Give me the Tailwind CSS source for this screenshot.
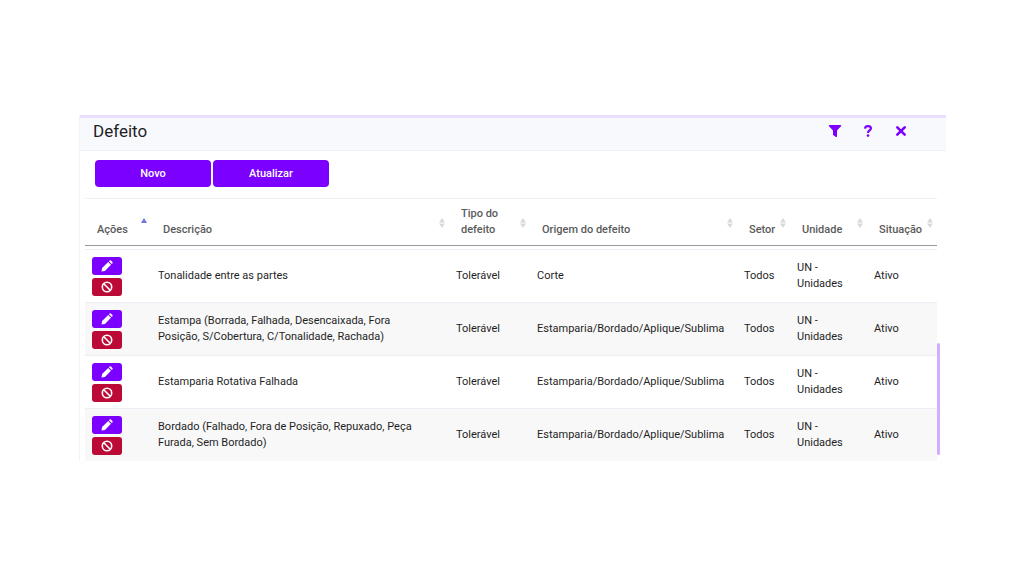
<!DOCTYPE html>
<html lang="pt-BR">
  <head>
    <meta charset="UTF-8" />
    <meta name="viewport" content="width=device-width, initial-scale=1.0" />
    <title>Defeito</title>
    <script src="https://cdn.jsdelivr.net/npm/@tailwindcss/browser@4"></script>
  </head>
  <body class="bg-white font-['Roboto',sans-serif] text-[11px] leading-4 text-[#1f1f1f]">
    <!-- Ícones -->
    <svg class="hidden">
      <symbol id="pencil" viewBox="0 0 12 12">
        <path d="M.5 11.500l.6-3.400L7.200 2l2.800 2.800-6.100 6.100z" />
        <path d="M7.900 1.300l.7-.7a1 1 0 0 1 1.300 0l1.500 1.500a1 1 0 0 1 0 1.300l-.7.7z" />
      </symbol>
      <symbol id="ban" viewBox="0 0 12 12">
        <circle cx="6" cy="6" r="4.700" fill="none" stroke="currentColor" stroke-width="1.600" />
        <path d="M2.800 2.800l6.400 6.400" stroke="currentColor" stroke-width="1.600" />
      </symbol>
      <symbol id="sort" viewBox="0 0 6 10">
        <path d="M3 0l3 4.500H0zM3 10L0 5.500h6z" />
      </symbol>
    </svg>

    <main class="mt-[115px] mr-[78px] ml-[79px] border-l border-[#f3f3f9]">
      <header class="flex items-start justify-between border-t-3 border-b border-t-[#ebdffd] border-b-[#eff0f5] bg-[#f8f9fd] pr-[38px] pb-1.5 pl-[13px]">
        <h1 class="text-[17px] leading-[26px]">Defeito</h1>
        <div class="flex h-[26px] items-center gap-[19px] text-[#7b00ff]">
          <button type="button" aria-label="Filtrar" class="flex size-3.5 items-center justify-center">
            <svg class="size-3.5" viewBox="0 0 14 14" fill="currentColor"><path d="M1.500 1h11c.7 0 1 .8.500 1.300L9 6.500V12.500c0 .5-.6.800-1 .5L5.400 11.200A.8.8 0 0 1 5 10.500v-4L1 2.300C.5 1.800.8 1 1.500 1z" /></svg>
          </button>
          <button type="button" aria-label="Ajuda" class="flex size-3.5 items-center justify-center">
            <svg class="size-3.5" viewBox="0 0 14 14" fill="none" stroke="currentColor" stroke-width="2.200"><path d="M4 4.600C4.200 3 5.300 2.200 7 2.200c1.800 0 2.900.9 2.900 2.300C9.900 6.500 7 6.500 7 8.900" /><circle cx="7" cy="11.600" r="1.300" fill="currentColor" stroke="none" /></svg>
          </button>
          <button type="button" aria-label="Fechar" class="flex size-3.5 items-center justify-center">
            <svg class="size-3.5" viewBox="0 0 14 14" fill="none" stroke="currentColor" stroke-width="2.600" stroke-linecap="round"><path d="M3.300 3.300l7.400 7.400M10.700 3.300l-7.400 7.400" /></svg>
          </button>
        </div>
      </header>

      <div class="flex gap-0.5 pt-[9px] pb-[11px] pl-[15px] font-medium text-white">
        <button type="button" class="h-[27px] w-29 rounded bg-[#7b00ff]">Novo</button>
        <button type="button" class="h-[27px] w-29 rounded bg-[#7b00ff]">Atualizar</button>
      </div>

      <div class="flex items-end pr-1.5 pl-[5px]">
        <table class="w-full table-fixed border-separate border-spacing-0 border-t border-[#eff0f5] text-left">
          <colgroup>
            <col class="w-[66px]" />
            <col />
            <col class="w-[81px]" />
            <col class="w-[207px]" />
            <col class="w-[53px]" />
            <col class="w-[77px]" />
            <col class="w-[70px]" />
          </colgroup>
          <thead class="align-bottom text-[#5b5b5b]">
            <tr class="*:relative *:h-[47px] *:border-b *:border-[#999] *:pb-[7px] *:pl-3 *:font-medium">
              <th scope="col">Ações<svg class="absolute top-[19px] right-1 h-[10px] w-1.5" viewBox="0 0 6 10" fill="#6f78e0"><path d="M3 0l3 5H0z" /></svg></th>
              <th scope="col">Descrição<svg class="absolute top-[19px] right-1 h-[10px] w-1.5 fill-[#d9d9d9]"><use href="#sort" /></svg></th>
              <th scope="col">Tipo do<br />defeito<svg class="absolute top-[19px] right-1 h-[10px] w-1.5 fill-[#d9d9d9]"><use href="#sort" /></svg></th>
              <th scope="col">Origem do defeito<svg class="absolute top-[19px] right-1 h-[10px] w-1.5 fill-[#d9d9d9]"><use href="#sort" /></svg></th>
              <th scope="col">Setor<svg class="absolute top-[19px] right-1 h-[10px] w-1.5 fill-[#d9d9d9]"><use href="#sort" /></svg></th>
              <th scope="col">Unidade<svg class="absolute top-[19px] right-1 h-[10px] w-1.5 fill-[#d9d9d9]"><use href="#sort" /></svg></th>
              <th scope="col">Situação<svg class="absolute top-[19px] right-1 h-[10px] w-1.5 fill-[#d9d9d9]"><use href="#sort" /></svg></th>
            </tr>
            <tr aria-hidden="true"><td colspan="7" class="h-[3px]"></td></tr>
          </thead>
          <tbody class="*:*:h-[53px] *:*:border-t *:*:border-[#eeeef6] *:*:pl-[7px] *:even:bg-[#f8f8f8]">
            <tr>
              <td>
                <div class="flex w-[30px] flex-col gap-[3px] text-white">
                  <button type="button" aria-label="Editar" class="flex h-[18px] items-center justify-center rounded-[3px] bg-[#7b00ff]"><svg class="size-3 fill-current"><use href="#pencil" /></svg></button>
                  <button type="button" aria-label="Inativar" class="flex h-[18px] items-center justify-center rounded-[3px] bg-[#bb0a35]"><svg class="size-3"><use href="#ban" /></svg></button>
                </div>
              </td>
              <td>Tonalidade entre as partes</td>
              <td>Tolerável</td>
              <td>Corte</td>
              <td>Todos</td>
              <td>UN -<br />Unidades</td>
              <td>Ativo</td>
            </tr>
            <tr>
              <td>
                <div class="flex w-[30px] flex-col gap-[3px] text-white">
                  <button type="button" aria-label="Editar" class="flex h-[18px] items-center justify-center rounded-[3px] bg-[#7b00ff]"><svg class="size-3 fill-current"><use href="#pencil" /></svg></button>
                  <button type="button" aria-label="Inativar" class="flex h-[18px] items-center justify-center rounded-[3px] bg-[#bb0a35]"><svg class="size-3"><use href="#ban" /></svg></button>
                </div>
              </td>
              <td>Estampa (Borrada, Falhada, Desencaixada, Fora<br />Posição, S/Cobertura, C/Tonalidade, Rachada)</td>
              <td>Tolerável</td>
              <td>Estamparia/Bordado/Aplique/Sublima</td>
              <td>Todos</td>
              <td>UN -<br />Unidades</td>
              <td>Ativo</td>
            </tr>
            <tr>
              <td>
                <div class="flex w-[30px] flex-col gap-[3px] text-white">
                  <button type="button" aria-label="Editar" class="flex h-[18px] items-center justify-center rounded-[3px] bg-[#7b00ff]"><svg class="size-3 fill-current"><use href="#pencil" /></svg></button>
                  <button type="button" aria-label="Inativar" class="flex h-[18px] items-center justify-center rounded-[3px] bg-[#bb0a35]"><svg class="size-3"><use href="#ban" /></svg></button>
                </div>
              </td>
              <td>Estamparia Rotativa Falhada</td>
              <td>Tolerável</td>
              <td>Estamparia/Bordado/Aplique/Sublima</td>
              <td>Todos</td>
              <td>UN -<br />Unidades</td>
              <td>Ativo</td>
            </tr>
            <tr>
              <td>
                <div class="flex w-[30px] flex-col gap-[3px] text-white">
                  <button type="button" aria-label="Editar" class="flex h-[18px] items-center justify-center rounded-[3px] bg-[#7b00ff]"><svg class="size-3 fill-current"><use href="#pencil" /></svg></button>
                  <button type="button" aria-label="Inativar" class="flex h-[18px] items-center justify-center rounded-[3px] bg-[#bb0a35]"><svg class="size-3"><use href="#ban" /></svg></button>
                </div>
              </td>
              <td>Bordado (Falhado, Fora de Posição, Repuxado, Peça<br />Furada, Sem Bordado)</td>
              <td>Tolerável</td>
              <td>Estamparia/Bordado/Aplique/Sublima</td>
              <td>Todos</td>
              <td>UN -<br />Unidades</td>
              <td>Ativo</td>
            </tr>
          </tbody>
        </table>
        <!-- Barra de rolagem -->
        <div class="mb-1.5 h-28 w-[3px] shrink-0 rounded-full bg-[#d5adff]"></div>
      </div>
    </main>
  </body>
</html>
